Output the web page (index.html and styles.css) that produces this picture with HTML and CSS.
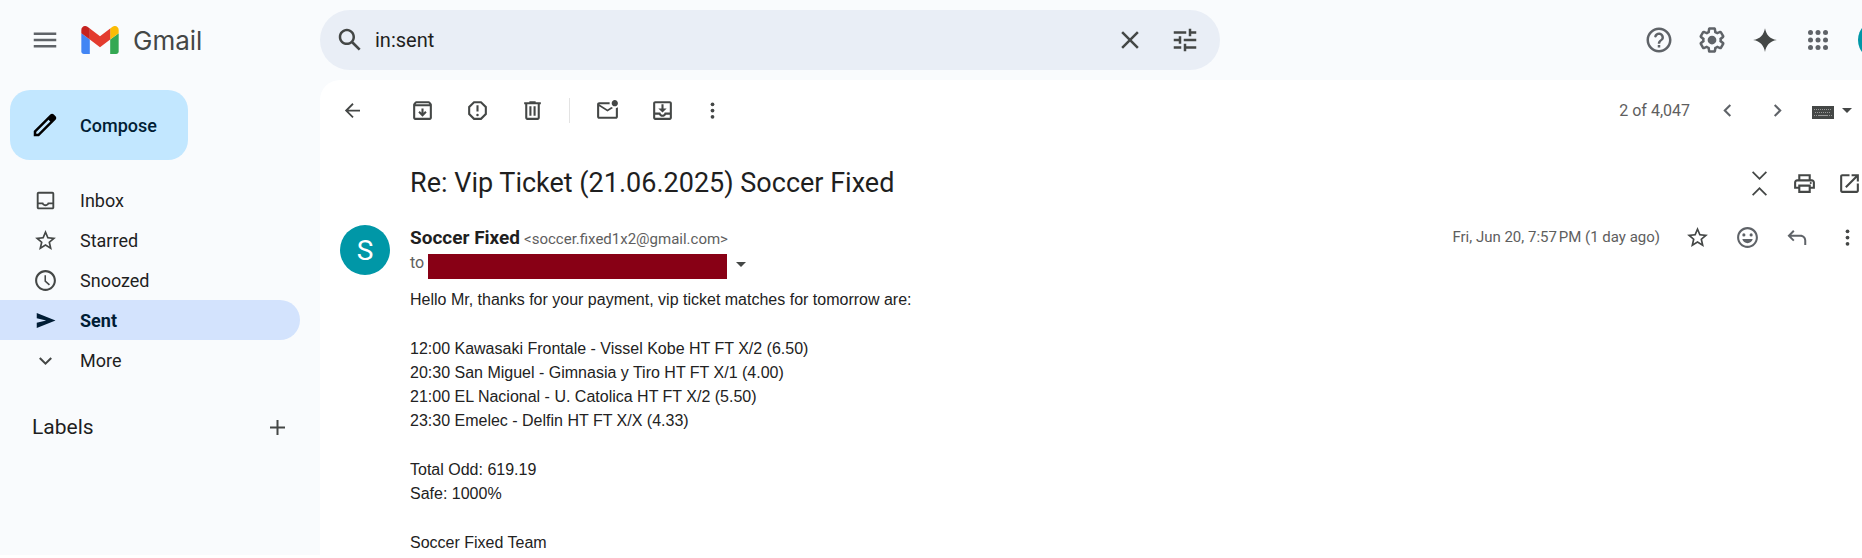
FILE: index.html
```html
<!DOCTYPE html>
<html lang="en">
<head>
  <meta charset="UTF-8" />
  <meta name="viewport" content="width=device-width, initial-scale=1.0"/>
  <title>Re: Vip Ticket (21.06.2025) Soccer Fixed - Gmail</title>
  <link rel="stylesheet" href="styles.css">
</head>
<body>
  <header class="top-bar">
    <div class="brand">
      <button class="icon-button large muted" aria-label="Main menu">
        <svg viewBox="0 0 24 24"><path d="M3 18h18v-2H3v2zm0-5h18v-2H3v2zm0-7v2h18V6H3z"/></svg>
      </button>
      <a class="logo" href="#">
        <svg class="logo-mark" viewBox="52 42 88 66" aria-hidden="true">
          <path fill="#4285f4" d="M58 108h14V74L52 59v43c0 3.32 2.69 6 6 6"/>
          <path fill="#34a853" d="M120 108h14c3.32 0 6-2.69 6-6V59l-20 15"/>
          <path fill="#fbbc04" d="M120 48v26l20-15v-8c0-7.42-8.47-11.65-14.4-7.2"/>
          <path fill="#e33b2e" d="M72 74V48l24 18 24-18v26L96 92"/>
          <path fill="#c5221f" d="M52 51v8l20 15V48l-5.6-4.2c-5.94-4.45-14.4-.22-14.4 7.2"/>
        </svg>
        <span>Gmail</span>
      </a>
    </div>
    <form class="search">
      <button type="button" class="icon-button large" aria-label="Search mail">
        <svg viewBox="0 0 24 24"><path d="M20.49 19l-5.73-5.73C15.53 12.2 16 10.91 16 9.5 16 5.91 13.09 3 9.5 3S3 5.91 3 9.5 5.91 16 9.5 16c1.41 0 2.7-.47 3.77-1.24L19 20.49 20.49 19zM5 9.5C5 7.01 7.01 5 9.5 5S14 7.01 14 9.5 11.99 14 9.5 14 5 11.99 5 9.5z"/></svg>
      </button>
      <input class="search-input" type="text" value="in:sent" aria-label="Search mail">
      <button type="button" class="icon-button large" aria-label="Clear search">
        <svg viewBox="0 0 24 24"><path d="M19 6.41L17.59 5 12 10.59 6.41 5 5 6.41 10.59 12 5 17.59 6.41 19 12 13.41 17.59 19 19 17.59 13.41 12z"/></svg>
      </button>
      <button type="button" class="icon-button large options" aria-label="Show search options">
        <svg viewBox="0 0 24 24"><path d="M3 17v2h6v-2H3zM3 5v2h10V5H3zm10 16v-2h8v-2h-8v-2h-2v6h2zM7 9v2H3v2h4v2h2V9H7zm14 4v-2H11v2h10zm-6-4h2V7h4V5h-4V3h-2v6z"/></svg>
      </button>
    </form>
    <div class="top-actions">
      <button class="icon-button large muted" aria-label="Support">
        <svg viewBox="0 0 24 24"><path d="M12 2C6.48 2 2 6.48 2 12s4.48 10 10 10 10-4.48 10-10S17.52 2 12 2zm0 18c-4.41 0-8-3.59-8-8s3.59-8 8-8 8 3.59 8 8-3.59 8-8 8zm-1-4h2v2h-2zm1.61-9.96c-2.06-.3-3.88.97-4.43 2.79-.18.58.26 1.17.87 1.17h.2c.41 0 .74-.29.88-.67.32-.89 1.27-1.5 2.3-1.28.95.2 1.65 1.13 1.57 2.1-.1 1.34-1.62 1.63-2.45 2.88 0 .01-.01.01-.01.02-.01.02-.02.03-.03.05-.09.15-.18.32-.25.5-.01.03-.03.05-.04.08-.01.02-.01.04-.02.07-.12.34-.2.75-.2 1.25h2c0-.42.11-.77.28-1.07.02-.03.03-.06.05-.09.08-.14.18-.27.28-.39.01-.01.02-.03.03-.04.1-.12.21-.23.33-.34.96-.91 2.26-1.65 1.99-3.56-.24-1.74-1.61-3.21-3.35-3.47z"/></svg>
      </button>
      <button class="icon-button large muted" aria-label="Settings">
        <svg viewBox="0 0 24 24"><path d="M13.85 22.25h-3.7c-.74 0-1.36-.54-1.45-1.27l-.27-1.89c-.27-.14-.53-.29-.79-.46l-1.8.72c-.7.26-1.47-.03-1.81-.65L2.2 15.53c-.35-.66-.2-1.44.36-1.88l1.53-1.19c-.01-.15-.02-.3-.02-.46 0-.15.01-.31.02-.46l-1.52-1.19c-.59-.45-.74-1.26-.37-1.88l1.85-3.19c.34-.62 1.11-.9 1.79-.63l1.81.73c.26-.17.52-.32.78-.46l.27-1.91c.09-.7.71-1.25 1.44-1.25h3.7c.74 0 1.36.54 1.45 1.27l.27 1.89c.27.14.53.29.79.46l1.8-.72c.71-.26 1.48.03 1.82.65l1.84 3.18c.36.66.2 1.44-.36 1.88l-1.52 1.19c.01.15.02.3.02.46s-.01.31-.02.46l1.52 1.19c.56.45.72 1.23.37 1.86l-1.86 3.22c-.34.62-1.11.9-1.8.63l-1.8-.72c-.26.17-.52.32-.78.46l-.27 1.91c-.1.68-.72 1.22-1.46 1.22zm-3.23-2h2.76l.37-2.55.53-.22c.44-.18.88-.44 1.34-.78l.45-.34 2.38.96 1.38-2.4-2.03-1.58.07-.56c.03-.26.06-.51.06-.78s-.03-.53-.06-.78l-.07-.56 2.03-1.58-1.39-2.4-2.39.96-.45-.35c-.42-.32-.87-.58-1.33-.77l-.52-.22-.37-2.55h-2.76l-.37 2.55-.53.21c-.44.19-.88.44-1.34.79l-.45.33-2.38-.95-1.39 2.39 2.03 1.58-.07.56a7 7 0 0 0-.06.79c0 .26.02.53.06.78l.07.56-2.03 1.58 1.38 2.4 2.39-.96.45.35c.43.33.86.58 1.33.77l.53.22.38 2.55z"/><circle cx="12" cy="12" r="3.5"/></svg>
      </button>
      <button class="icon-button large" aria-label="Gemini">
        <svg viewBox="0 0 24 24"><path d="M12 2.5c1 5 3.5 8.5 9.500 9.500-6 1-8.500 4.500-9.500 9.500-1-5-3.500-8.500-9.500-9.500 6-1 8.500-4.500 9.500-9.500z"/></svg>
      </button>
      <button class="icon-button large muted" aria-label="Google apps">
        <svg viewBox="0 0 24 24"><circle cx="6" cy="6" r="2"/><circle cx="12" cy="6" r="2"/><circle cx="18" cy="6" r="2"/><circle cx="6" cy="12" r="2"/><circle cx="12" cy="12" r="2"/><circle cx="18" cy="12" r="2"/><circle cx="6" cy="18" r="2"/><circle cx="12" cy="18" r="2"/><circle cx="18" cy="18" r="2"/></svg>
      </button>
      <button class="account" aria-label="Google Account"></button>
    </div>
  </header>

  <div class="layout">
    <aside class="sidebar">
      <button class="compose">
        <svg viewBox="0 0 24 24"><path d="M20.41 4.94l-1.350-1.350c-.78-.78-2.050-.78-2.830 0L3 16.820V21h4.180L20.410 7.770c.79-.78.79-2.050 0-2.830zM6.410 19.060L5 19v-1.360l9.820-9.820 1.410 1.410-9.820 9.830z"/></svg>
        <span>Compose</span>
      </button>
      <nav class="folders">
        <a class="folder" href="#inbox">
          <svg viewBox="0 0 20 20"><path d="M15.5 3h-11C3.67 3 3 3.67 3 4.5v11c0 .83.67 1.5 1.5 1.5h11c.83 0 1.5-.67 1.5-1.5v-11c0-.83-.67-1.5-1.5-1.5zm0 12.500h-11V13h2.750c.58.9 1.600 1.500 2.750 1.500s2.170-.6 2.750-1.500h2.750v2.500zm0-4h-3.750c0 .83-.92 1.500-1.750 1.500s-1.750-.67-1.750-1.500H4.500v-7h11v7z"/></svg>
          <span>Inbox</span>
        </a>
        <a class="folder" href="#starred">
          <svg viewBox="0 0 24 24"><path d="M22 9.240l-7.190-.62L12 2 9.190 8.630 2 9.240l5.460 4.730L5.820 21 12 17.270 18.180 21l-1.630-7.030L22 9.240zM12 15.400l-3.760 2.270 1-4.280-3.320-2.880 4.380-.38L12 6.100l1.710 4.040 4.380.38-3.320 2.880 1 4.280L12 15.400z"/></svg>
          <span>Starred</span>
        </a>
        <a class="folder" href="#snoozed">
          <svg viewBox="0 0 24 24"><path d="M12 2C6.500 2 2 6.500 2 12s4.500 10 10 10 10-4.500 10-10S17.500 2 12 2zm0 18c-4.410 0-8-3.590-8-8s3.590-8 8-8 8 3.590 8 8-3.590 8-8 8zm.5-13H11v6l4.300 3.900 1-1.200-3.800-3.400V7z"/></svg>
          <span>Snoozed</span>
        </a>
        <a class="folder active" href="#sent">
          <svg viewBox="0 0 20 20"><path d="M3 4v4.200L10.500 10 3 11.800V16l15-6z"/></svg>
          <span>Sent</span>
        </a>
        <a class="folder" href="#more">
          <svg viewBox="0 0 24 24"><path d="M12 16.410l-6.200-6.200L7.210 8.800 12 13.590l4.790-4.790 1.410 1.410z"/></svg>
          <span>More</span>
        </a>
      </nav>
      <div class="labels">
        <h2>Labels</h2>
        <button class="icon-button" aria-label="Create new label">
          <svg viewBox="0 0 20 20"><path d="M16 10.800h-5.200V16H9.200v-5.200H4V9.200h5.200V4h1.600v5.200H16z"/></svg>
        </button>
      </div>
    </aside>

    <main class="mail">
      <div class="toolbar">
        <button class="icon-button back" aria-label="Back to Sent">
          <svg viewBox="0 0 20 20"><path d="M16 9.300H6.700l4.200-4.200L9.900 4l-6 6 6 6 1-1.100-4.200-4.200H16z"/></svg>
        </button>
        <div class="tool-group">
          <button class="icon-button" aria-label="Archive">
            <svg viewBox="0 0 24 24"><path d="M20.540 5.230l-1.390-1.680C18.880 3.210 18.470 3 18 3H6c-.47 0-.88.21-1.160.55L3.460 5.230C3.170 5.570 3 6.020 3 6.500V19c0 1.100.9 2 2 2h14c1.100 0 2-.9 2-2V6.500c0-.48-.17-.93-.46-1.270zM6.240 5h11.520l.83 1H5.420l.82-1zM5 19V8h14v11H5zm6-9v4.170l-1.590-1.580L8 14l4 4 4-4-1.410-1.410L13 14.170V10z"/></svg>
          </button>
          <button class="icon-button" aria-label="Report spam">
            <svg viewBox="0 0 24 24"><path d="M15.730 3H8.270L3 8.270v7.460L8.270 21h7.460L21 15.730V8.270L15.730 3zM19 14.900L14.900 19H9.100L5 14.900V9.100L9.100 5h5.800L19 9.100v5.800zM11 7h2v6h-2zM12 15a1.200 1.200 0 1 0 0 2.400 1.200 1.200 0 0 0 0-2.400z"/></svg>
          </button>
          <button class="icon-button" aria-label="Delete">
            <svg viewBox="0 0 24 24"><path d="M15 4V3H9v1H4v2h1v13c0 1.100.9 2 2 2h10c1.100 0 2-.9 2-2V6h1V4h-5zm2 15H7V6h10v13zM9 8h2v9H9zm4 0h2v9h-2z"/></svg>
          </button>
        </div>
        <div class="tool-group divided">
          <button class="icon-button" aria-label="Mark as unread">
            <svg viewBox="0 0 24 24"><path d="M22 8.980V18c0 1.100-.9 2-2 2H4c-1.100 0-2-.9-2-2V6c0-1.100.9-2 2-2h10.100c-.13.640-.13 1.320 0 2H4l8 5 3.670-2.290c.47.430 1.020.760 1.630.980L12 13 4 8v10h16V9.900c.74-.15 1.420-.48 2-.92zM16 5c0 1.660 1.340 3 3 3s3-1.340 3-3-1.340-3-3-3-3 1.340-3 3z"/></svg>
          </button>
          <button class="icon-button" aria-label="Move to inbox">
            <svg viewBox="0 0 24 24"><path d="M19 3H5c-1.100 0-2 .9-2 2v14c0 1.100.9 2 2 2h14c1.100 0 2-.9 2-2V5c0-1.100-.9-2-2-2zm0 16H5v-3h3.560c.69 1.190 1.970 2 3.450 2s2.750-.81 3.450-2H19v3zm0-5h-4.990c0 1.100-.91 2-2.010 2s-2-.9-2-2H5V5h14v9zm-3-4h-3V6h-2v4H8l4 4 4-4z"/></svg>
          </button>
          <button class="icon-button slim" aria-label="More email options">
            <svg viewBox="0 0 20 20"><circle cx="10" cy="5" r="1.500"/><circle cx="10" cy="10" r="1.500"/><circle cx="10" cy="15" r="1.500"/></svg>
          </button>
        </div>
        <div class="pager">
          <span class="count">2 of 4,047</span>
          <button class="icon-button muted" aria-label="Newer">
            <svg viewBox="0 0 24 24"><path d="M15.410 7.410L14 6l-6 6 6 6 1.410-1.410L10.830 12z"/></svg>
          </button>
          <button class="icon-button muted" aria-label="Older">
            <svg viewBox="0 0 24 24"><path d="M8.590 16.590L13.170 12 8.590 7.410 10 6l6 6-6 6z"/></svg>
          </button>
          <button class="input-tools" aria-label="Select input tool">
            <svg class="keyboard" viewBox="0 0 22 13"><path d="M0 0h22v13H0z"/><path fill="none" stroke="#999" stroke-dasharray="1 1" d="M2 3.500h18M3 6.500h16M2 9.500h3M17 9.500h3"/><path fill="none" stroke="#999" d="M6 9.500h10"/></svg>
            <svg class="caret" viewBox="0 0 10 5"><path d="M0 0h10L5 5z"/></svg>
          </button>
        </div>
      </div>

      <div class="subject-row">
        <h1 class="subject">Re: Vip Ticket (21.06.2025) Soccer Fixed</h1>
        <button class="icon-button" aria-label="Collapse all">
          <svg viewBox="0 0 20 20"><path d="M10 7.200L4 1.200 5 .2l5 5 5-5 1 1zM10 12.800l-6 6 1 1 5-5 5 5 1-1z"/></svg>
        </button>
        <button class="icon-button" aria-label="Print all">
          <svg viewBox="0 0 24 24"><path d="M19 8h-1V3H6v5H5c-1.660 0-3 1.340-3 3v6h4v4h12v-4h4v-6c0-1.660-1.340-3-3-3zM8 5h8v3H8V5zm8 14H8v-4h8v4zm2-4v-2H6v2H4v-4c0-.55.45-1 1-1h14c.55 0 1 .45 1 1v4h-2z"/><circle cx="18" cy="11.500" r="1"/></svg>
        </button>
        <button class="icon-button" aria-label="In new window">
          <svg viewBox="0 0 24 24"><path d="M19 19H5V5h7V3H5c-1.110 0-2 .9-2 2v14c0 1.100.89 2 2 2h14c1.100 0 2-.9 2-2v-7h-2v7zM14 3v2h3.590l-9.830 9.830 1.410 1.410L19 6.410V10h2V3h-7z"/></svg>
        </button>
      </div>

      <article class="message">
        <div class="avatar">S</div>
        <div class="message-content">
          <div class="message-head">
            <div class="sender">
              <h3>Soccer Fixed</h3>
              <span class="address">&lt;soccer.fixed1x2@gmail.com&gt;</span>
            </div>
            <span class="date">Fri, Jun 20, 7:57&#8239;PM (1 day ago)</span>
            <button class="icon-button" aria-label="Star">
              <svg viewBox="0 0 24 24"><path d="M22 9.240l-7.190-.62L12 2 9.190 8.630 2 9.240l5.460 4.730L5.820 21 12 17.270 18.180 21l-1.630-7.030L22 9.240zM12 15.400l-3.760 2.270 1-4.280-3.320-2.880 4.380-.38L12 6.100l1.710 4.040 4.380.38-3.320 2.880 1 4.280L12 15.400z"/></svg>
            </button>
            <button class="icon-button muted" aria-label="Add reaction">
              <svg viewBox="0 0 24 24"><path d="M12 2C6.500 2 2 6.500 2 12s4.500 10 10 10 10-4.500 10-10S17.500 2 12 2zm0 18c-4.410 0-8-3.590-8-8s3.590-8 8-8 8 3.590 8 8-3.590 8-8 8z"/><circle cx="8.500" cy="9.500" r="1.500"/><circle cx="15.500" cy="9.500" r="1.500"/><path d="M7 13.500h10c-.6 2.400-2.600 4-5 4s-4.400-1.600-5-4z"/></svg>
            </button>
            <button class="icon-button muted" aria-label="Reply">
              <svg viewBox="0 0 20 20"><path d="M6.500 4l1.100 1.100L5 7.700h7.300c2.700 0 4.700 2 4.700 4.700V16h-1.600v-3.600c0-1.800-1.300-3.100-3.100-3.100H5l2.600 2.600L6.500 13 2 8.500z"/></svg>
            </button>
            <button class="icon-button" aria-label="More message options">
              <svg viewBox="0 0 20 20"><circle cx="10" cy="5" r="1.500"/><circle cx="10" cy="10" r="1.500"/><circle cx="10" cy="15" r="1.500"/></svg>
            </button>
          </div>
          <div class="recipient">
            <span>to</span>
            <span class="redacted"></span>
            <button class="details" aria-label="Show details">
              <svg class="caret" viewBox="0 0 10 5"><path d="M0 0h10L5 5z"/></svg>
            </button>
          </div>
          <div class="message-body">
            <p>Hello Mr, thanks for your payment, vip ticket matches for tomorrow are:</p>
            <p>
              12:00 Kawasaki Frontale - Vissel Kobe HT FT X/2 (6.50)<br>
              20:30 San Miguel - Gimnasia y Tiro HT FT X/1 (4.00)<br>
              21:00 EL Nacional - U. Catolica HT FT X/2 (5.50)<br>
              23:30 Emelec - Delfin HT FT X/X (4.33)
            </p>
            <p>
              Total Odd: 619.19<br>
              Safe: 1000%
            </p>
            <p>Soccer Fixed Team</p>
          </div>
        </div>
      </article>
    </main>
  </div>
</body>
</html>
```

FILE: styles.css
```css
* {
  box-sizing: border-box;
}
body {
  background-color: #f9fbfd;
  color: #1f1f1f;
  font-family: Roboto, "Liberation Sans", sans-serif;
  margin: 0;
  min-height: 100vh;
  display: flex;
  flex-direction: column;
  overflow: hidden;
  border-bottom: 4px solid #fff;
}
h1, h2, h3, p {
  margin: 0;
  font-weight: 400;
}
a {
  color: inherit;
  text-decoration: none;
}
button {
  background: none;
  border: none;
  padding: 0;
  color: inherit;
  font-family: inherit;
  cursor: pointer;
}
svg {
  display: block;
  flex: none;
  fill: currentColor;
}
.icon-button {
  flex: none;
  display: flex;
  align-items: center;
  justify-content: center;
  width: 50px;
  height: 50px;
  color: #444746;
  border-radius: 50%;
}
.icon-button svg {
  width: 25px;
  height: 25px;
}
.icon-button.large svg {
  width: 30px;
  height: 30px;
}
.icon-button.muted {
  color: #5f6368;
}

/* Top bar */
.top-bar {
  display: flex;
  align-items: center;
  height: 80px;
}
.brand {
  display: flex;
  align-items: center;
  gap: 11px;
  flex: none;
  width: 320px;
  padding-left: 20px;
}
.logo {
  display: flex;
  align-items: center;
  gap: 14px;
  color: #444746;
  font-family: Inter, Roboto, sans-serif;
  font-size: 26px;
}
.logo-mark {
  width: 38px;
  height: 28px;
}
.search {
  display: flex;
  align-items: center;
  flex: 0 1 900px;
  height: 60px;
  padding: 0 10px 0 5px;
  background: #e9eef6;
  border-radius: 30px;
}
.search-input {
  flex: 1;
  min-width: 0;
  border: none;
  outline: none;
  padding: 0;
  background: none;
  color: #1f1f1f;
  font-family: inherit;
  font-size: 20px;
}
.options {
  margin-left: 5px;
}
.top-actions {
  display: flex;
  align-items: center;
  gap: 3px;
  flex: none;
  margin-left: auto;
}
/* The avatar runs past the right edge of the window */
.account {
  flex: none;
  width: 40px;
  height: 40px;
  margin: 0 -36px 0 12px;
  background: #0097a7;
  border-radius: 50%;
}

/* Sidebar */
.layout {
  flex: 1;
  display: flex;
}
.sidebar {
  flex: none;
  width: 320px;
  padding-top: 10px;
}
.compose {
  display: flex;
  align-items: center;
  gap: 20px;
  height: 70px;
  margin-left: 10px;
  padding: 0 31px 0 20px;
  background: #c2e7ff;
  border-radius: 20px;
  color: #001d35;
  font-size: 18px;
  font-weight: 500;
}
.compose svg {
  width: 30px;
  height: 30px;
  fill: #000;
}
.folders {
  margin: 20px 20px 0 0;
}
.folder {
  display: flex;
  align-items: center;
  gap: 22px;
  height: 40px;
  padding-left: 33px;
  border-radius: 0 20px 20px 0;
  color: #1f1f1f;
  font-size: 18px;
}
.folder svg {
  width: 25px;
  height: 25px;
  fill: #444746;
}
.folder.active {
  background: #d3e3fd;
  color: #001d35;
  font-weight: 700;
}
.folder.active svg {
  fill: #001d35;
}
.labels {
  display: flex;
  align-items: center;
  justify-content: space-between;
  margin-top: 22px;
  padding: 0 18px 0 32px;
}
.labels h2 {
  font-size: 21px;
}

/* Mail pane */
.mail {
  flex: 1;
  min-width: 0;
  margin-right: -10px;
  background: #fff;
  border-top-left-radius: 20px;
}
.toolbar {
  display: flex;
  align-items: center;
  height: 60px;
  padding-left: 7px;
}
.back {
  margin-right: 20px;
}
.tool-group {
  display: flex;
  align-items: center;
  gap: 5px;
}
.divided {
  position: relative;
  margin-left: 12px;
  padding-left: 13px;
}
.divided::before {
  content: "";
  position: absolute;
  left: 0;
  width: 1px;
  height: 25px;
  background: #e3e3e3;
}
.slim {
  width: 40px;
}
.pager {
  display: flex;
  align-items: center;
  margin-left: auto;
  padding-right: 20px;
  color: #5e5e5e;
}
.count {
  margin-right: 12px;
  font-size: 16px;
}
.input-tools {
  display: flex;
  align-items: center;
  gap: 8px;
  margin-left: 10px;
  color: #444746;
}
.keyboard {
  width: 22px;
  height: 13px;
  margin-top: 4px;
}
.caret {
  width: 10px;
  height: 5px;
}
.subject-row {
  display: flex;
  align-items: center;
  min-height: 60px;
  margin-top: 13px;
  padding-left: 90px;
}
.subject-row .icon-button {
  width: 45px;
}
.subject {
  flex: 1;
  font-size: 27px;
}
.message {
  display: flex;
  margin-top: 7px;
  padding-left: 20px;
}
.avatar {
  flex: none;
  display: flex;
  align-items: center;
  justify-content: center;
  width: 50px;
  height: 50px;
  margin: 5px 20px 0 0;
  background: #0097a7;
  border-radius: 50%;
  color: #fff;
  font-size: 28px;
}
.message-content {
  flex: 1;
  min-width: 0;
}
.message-head {
  display: flex;
  align-items: center;
  height: 34px;
}
.sender {
  display: flex;
  align-items: baseline;
  gap: 4px;
  flex: 1;
}
.sender h3 {
  font-size: 19px;
  font-weight: 700;
}
.address, .date {
  color: #5e5e5e;
  font-size: 15px;
}
.date {
  margin-right: 12px;
}
.recipient {
  display: flex;
  align-items: flex-start;
  gap: 4px;
  color: #5e5e5e;
  font-size: 16px;
  line-height: 18px;
}
.redacted {
  width: 299px;
  height: 25px;
  background: #880015;
}
.details {
  padding: 8px 5px;
  color: #444746;
}
.message-body {
  display: flex;
  flex-direction: column;
  gap: 25px;
  margin-top: 9px;
  color: #222;
  font-family: "Liberation Sans", Arial, sans-serif;
  font-size: 16px;
  line-height: 24px;
}
```
